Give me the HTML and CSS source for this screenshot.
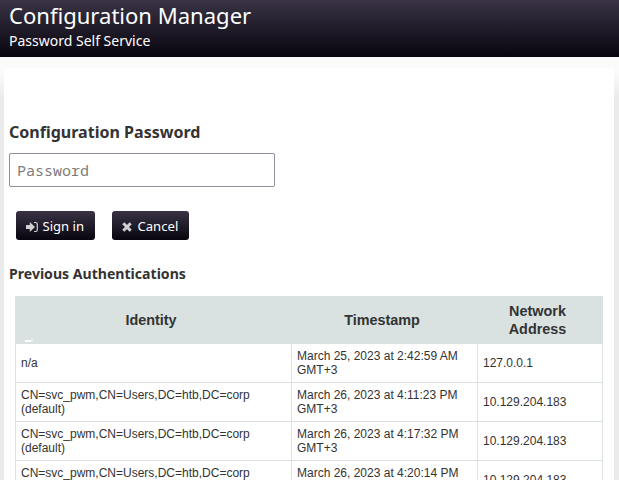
FILE: index.html
```html
<!DOCTYPE html>
<html lang="en">
<head>
<meta charset="utf-8">
<title>Configuration Manager</title>
<link rel="stylesheet" href="styles.css">
</head>
<body>
<header class="header">
  <h1 class="header-title">Configuration Manager</h1>
  <div class="header-subtitle">Password Self Service</div>
</header>
<main class="panel">
  <h2 class="field-title">Configuration Password</h2>
  <input class="password" type="password" placeholder="Password" aria-label="Password">
  <div class="buttons">
    <button class="btn btn-signin" type="button"><svg class="icon icon-signin" viewBox="0 0 12 12" aria-hidden="true"><path fill="currentColor" d="M0 3.900h3.800V.9L9 6l-5.200 5.100V8.100H0z"/><path fill="none" stroke="currentColor" stroke-width="1.200" d="M8 1.500h1.500A1.800 1.800 0 0 1 11.300 3.300v5.400A1.800 1.800 0 0 1 9.500 10.500H8"/></svg>Sign in</button>
    <button class="btn btn-cancel" type="button"><svg class="icon icon-cancel" viewBox="0 0 10 10" aria-hidden="true"><path fill="none" stroke="currentColor" stroke-width="3" d="M1.300 1.300l7.400 7.400M8.700 1.300L1.300 8.700"/></svg>Cancel</button>
  </div>
  <h3 class="table-title">Previous Authentications</h3>
  <table class="log">
    <colgroup><col class="col-identity"><col class="col-time"><col class="col-address"></colgroup>
    <thead>
      <tr><th class="marked">Identity</th><th>Timestamp</th><th>Network<br>Address</th></tr>
    </thead>
    <tbody>
      <tr><td>n/a</td><td>March 25, 2023 at 2:42:59 AM GMT+3</td><td>127.0.0.1</td></tr>
      <tr><td>CN=svc_pwm,CN=Users,DC=htb,DC=corp (default)</td><td>March 26, 2023 at 4:11:23 PM GMT+3</td><td>10.129.204.183</td></tr>
      <tr><td>CN=svc_pwm,CN=Users,DC=htb,DC=corp (default)</td><td>March 26, 2023 at 4:17:32 PM GMT+3</td><td>10.129.204.183</td></tr>
      <tr><td>CN=svc_pwm,CN=Users,DC=htb,DC=corp (default)</td><td>March 26, 2023 at 4:20:14 PM GMT+3</td><td>10.129.204.183</td></tr>
    </tbody>
  </table>
</main>
</body>
</html>
```
FILE: styles.css
```css
* { box-sizing: border-box; }

html {
  height: 480px;
  overflow: hidden;
}

body {
  height: 480px;
  margin: 0;
  overflow: hidden;
  background: linear-gradient(#fbfbfb 72px, #ebebeb 98px);
  color: #333;
  font-family: "Noto Sans", "Open Sans", sans-serif;
}

.header {
  height: 57px;
  padding: 0 9px;
  background: linear-gradient(#393345, #08050e);
  color: #fff;
}

.header-title {
  margin: 0;
  font-size: 22.05px;
  font-weight: 400;
  line-height: 31px;
}

.header-subtitle {
  font-size: 14px;
  line-height: 19px;
}

.panel {
  height: 412px;
  margin: 11px 5px 0 4px;
  padding: 53px 5px 0;
  overflow: hidden;
  border-radius: 4px 4px 0 0;
  background: #fff;
}

.field-title {
  margin: 0 0 10px;
  font-size: 16.05px;
  font-weight: 700;
  line-height: 22px;
}

.password {
  display: block;
  width: 266px;
  height: 34px;
  padding: 0 7px;
  border: 1px solid #8f8f9d;
  border-radius: 2px;
  background: #fff;
  font: 15px "Noto Sans Mono", "DejaVu Sans Mono", monospace;
}

.password::placeholder {
  color: #7c7c7c;
  opacity: 1;
}

.buttons {
  display: flex;
  gap: 17px;
  margin: 24px 0 0 7px;
}

.btn {
  display: flex;
  align-items: center;
  height: 29px;
  padding: 0 0 0 10px;
  border: 0;
  border-radius: 3px;
  background: linear-gradient(#393345, #08050e);
  color: #fff;
  font: 13.1px/18px "Noto Sans", "Open Sans", sans-serif;
  white-space: nowrap;
}

.btn-signin { width: 79px; }
.btn-cancel { width: 77px; }

.icon {
  flex: none;
  margin-top: 3px;
  color: #d0d0d0;
}

.icon-signin {
  width: 12px;
  height: 12px;
  margin-right: 4.500px;
}

.icon-cancel {
  width: 10px;
  height: 10px;
  margin-right: 5.500px;
}

.table-title {
  margin: 24px 0 12px;
  font-size: 14.08px;
  font-weight: 700;
  line-height: 20px;
}

.log {
  width: 588px;
  margin-left: 6px;
  border-collapse: collapse;
  table-layout: fixed;
  font-family: "Liberation Sans", Arial, sans-serif;
}

.col-identity { width: 276px; }
.col-time { width: 186px; }
.col-address { width: 125px; }

.log th {
  height: 47px;
  padding: 5px 10px 5px 5px;
  border: 1px solid #d9e2e1;
  background: #d9e2e1;
  font-size: 14.4px;
  font-weight: 700;
  line-height: 18px;
}

.marked { position: relative; }

.marked::after {
  content: "";
  position: absolute;
  left: 9px;
  bottom: 1px;
  width: 8px;
  height: 2px;
  background: linear-gradient(#fff, #fff) 0 0 / 8px 1px no-repeat, linear-gradient(#fff, #fff) 0 1px / 6px 1px no-repeat;
}

.log td {
  height: 39px;
  padding: 5px;
  border: 1px solid #d9e2e1;
  font-size: 12px;
  line-height: 14px;
}
```
